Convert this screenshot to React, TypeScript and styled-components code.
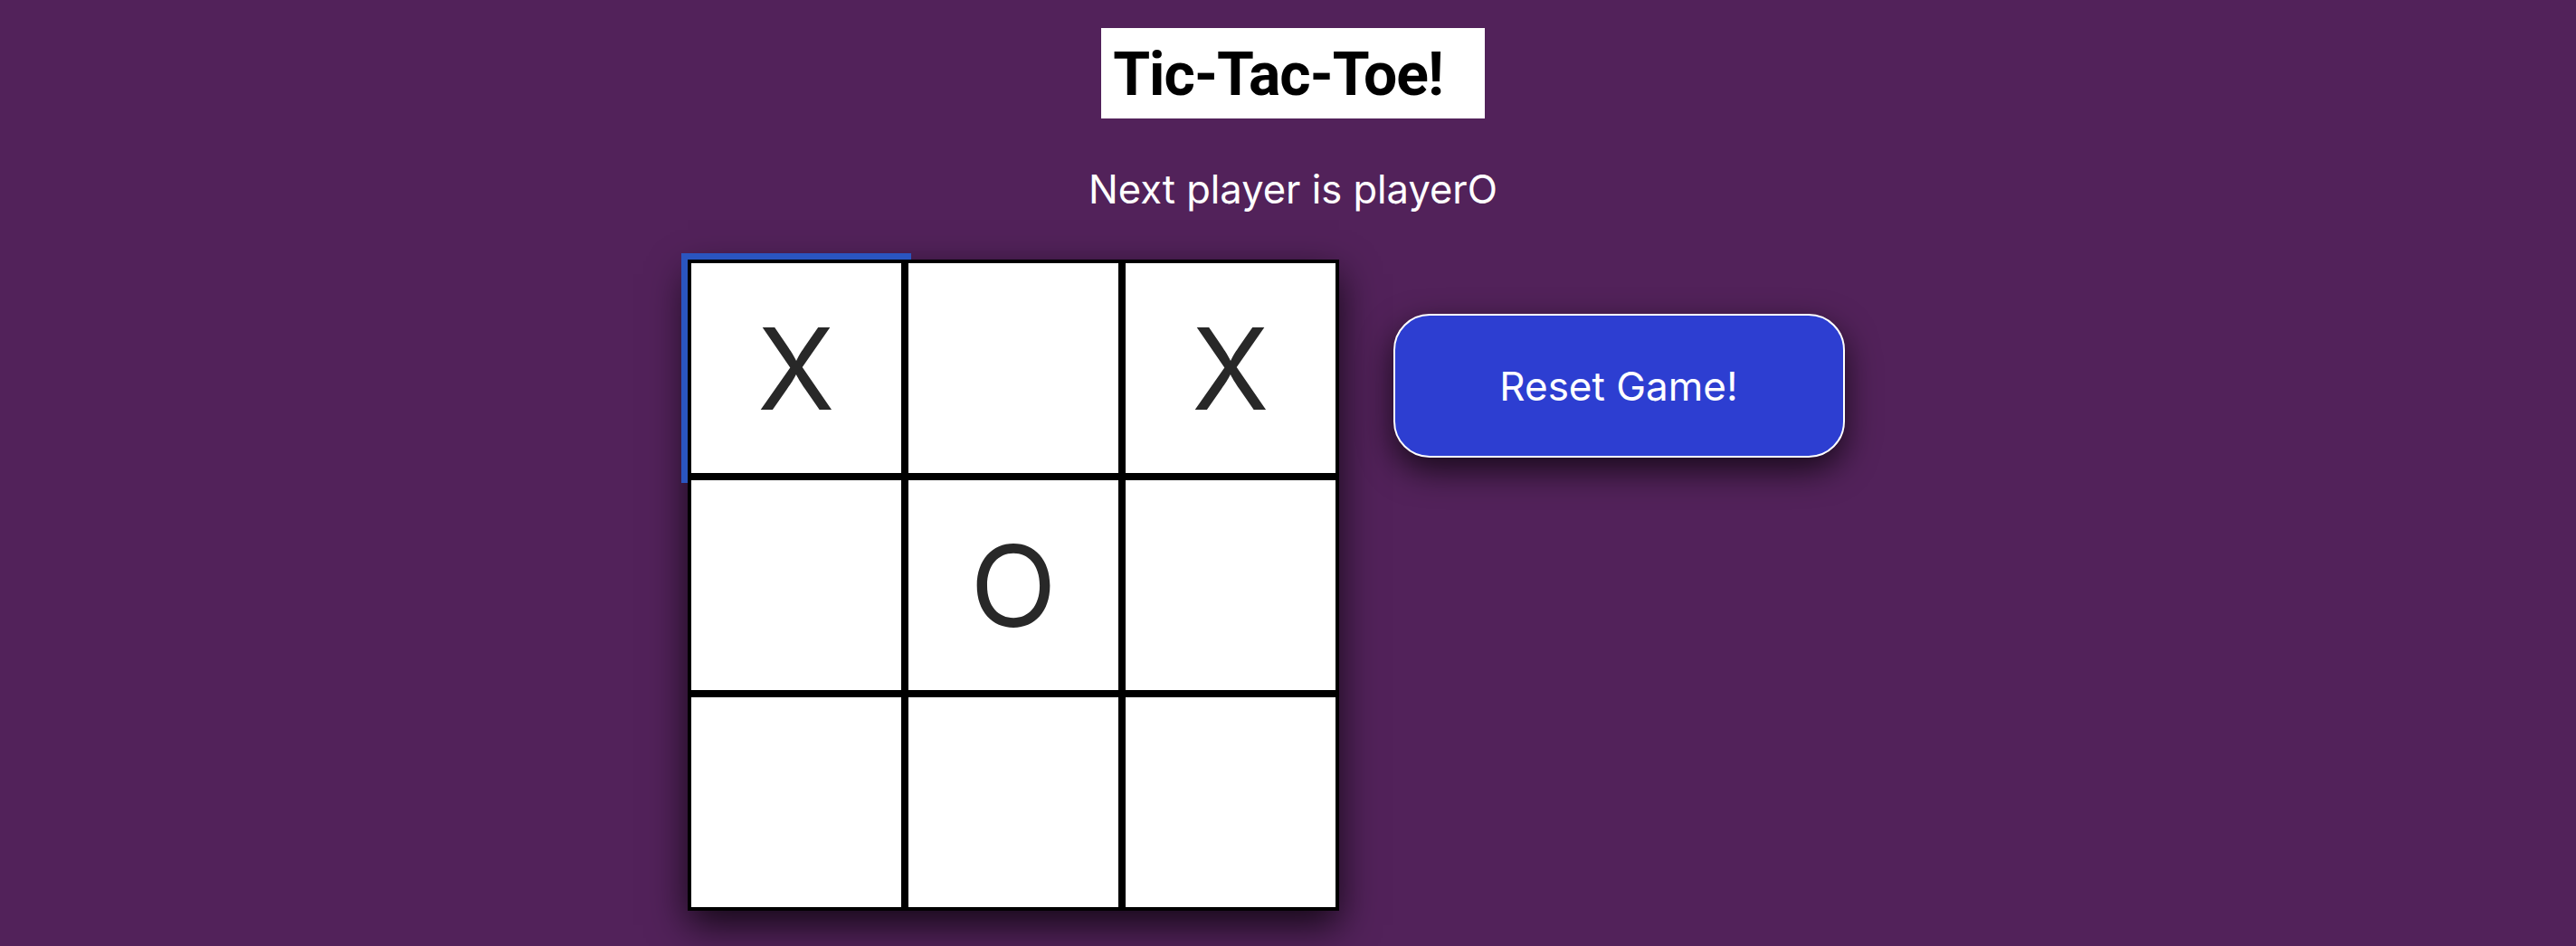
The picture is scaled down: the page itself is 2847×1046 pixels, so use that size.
import styled, { createGlobalStyle } from "styled-components";
import { useState } from "react";

type Mark = "X" | "O" | null;

const GlobalStyle = createGlobalStyle`
  html, body {
    margin: 0;
    padding: 0;
    background: #52225a;
  }
  body {
    font-family: Inter, "Noto Sans", sans-serif;
  }
`;

export default function App() {
  const [squares, setSquares] = useState<Mark[]>(["X", null, "X", null, "O", null, null, null, null]);
  const [xIsNext, setXIsNext] = useState(false);

  const handleClick = (i: number) => {
    if (squares[i]) return;
    const next = squares.slice();
    next[i] = xIsNext ? "X" : "O";
    setSquares(next);
    setXIsNext(!xIsNext);
  };

  const resetGame = () => {
    setSquares(Array(9).fill(null));
    setXIsNext(true);
  };

  return (
    <Page>
      <GlobalStyle />
      <Title>Tic-Tac-Toe!</Title>
      <Status>Next player is player{xIsNext ? "X" : "O"}</Status>
      <GameRow>
        <Board>
          {squares.map((value, i) => (
            <Square key={i} $focused={i === 0} onClick={() => handleClick(i)}>
              {value}
            </Square>
          ))}
        </Board>
        <ResetButton onClick={resetGame}>Reset Game!</ResetButton>
      </GameRow>
    </Page>
  );
}

const Page = styled.main`
  display: flex;
  flex-direction: column;
  align-items: center;
  min-height: 100vh;
  padding-left: 11px;
  box-sizing: border-box;
`;

const Title = styled.h1`
  margin: 31px 0 0;
  height: 100px;
  box-sizing: border-box;
  padding: 3px 46px 0 13px;
  background: #ffffff;
  color: #000000;
  font-family: Roboto, "Liberation Sans", sans-serif;
  font-weight: 700;
  font-size: 66px;
  letter-spacing: -1px;
  line-height: 97px;
`;

const Status = styled.p`
  margin: 52px 0 0;
  color: #ffffff;
  font-size: 43.5px;
  line-height: 52px;
`;

const GameRow = styled.section`
  display: flex;
  align-items: flex-start;
  margin-top: 52px;
`;

const Board = styled.div`
  display: grid;
  grid-template-columns: repeat(3, 240px);
  grid-template-rows: repeat(3, 240px);
  box-shadow: 0 16px 40px rgba(0, 0, 0, 0.75);
`;

const Square = styled.button<{ $focused?: boolean }>`
  display: flex;
  align-items: center;
  justify-content: center;
  box-sizing: border-box;
  margin: 0;
  padding: 0 0 0 1px;
  border: 4px solid #000000;
  background: #ffffff;
  color: #282828;
  font-family: Inter, "Noto Sans", sans-serif;
  font-size: 125px;
  font-weight: 400;
  cursor: pointer;
  outline: ${(p) => (p.$focused ? "7px solid #2a55c0" : "none")};
`;

const ResetButton = styled.button`
  margin: 60px;
  width: 499px;
  height: 159px;
  box-sizing: border-box;
  border: 2px solid #ffffff;
  border-radius: 40px;
  background: #2d3ed1;
  color: #ffffff;
  font-family: Inter, "Noto Sans", sans-serif;
  font-size: 44px;
  cursor: pointer;
  box-shadow: 0 14px 36px rgba(0, 0, 0, 0.7);
`;
